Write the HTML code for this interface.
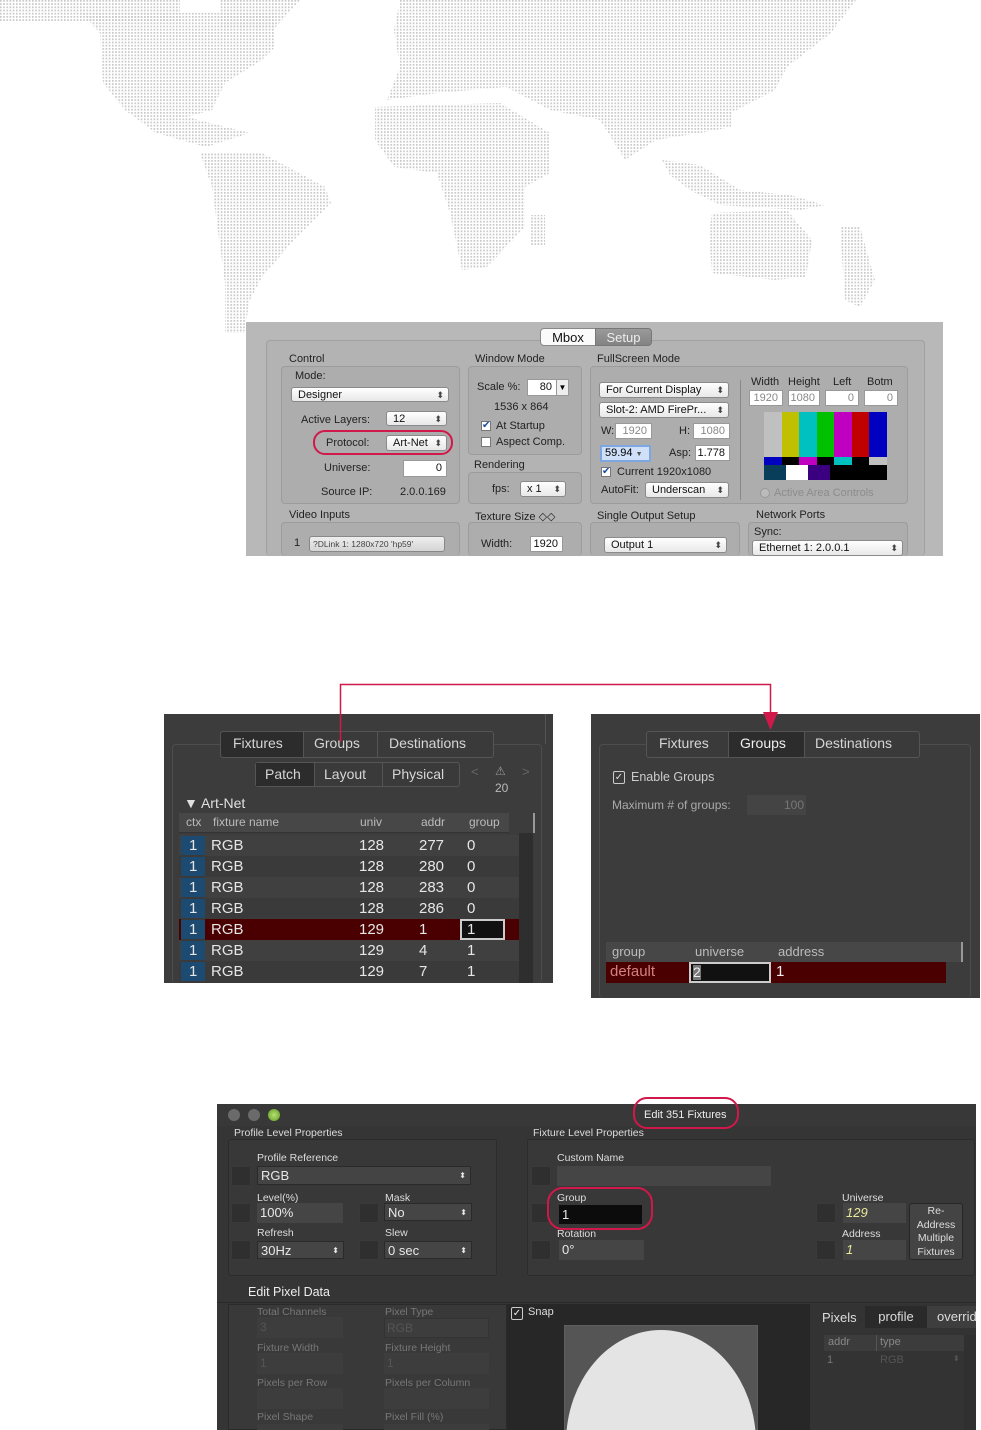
<!DOCTYPE html>
<html><head><meta charset="utf-8"><style>
*{box-sizing:border-box;margin:0;padding:0}
html{width:981px;height:1430px;overflow:hidden}
body{width:981px;height:1430px;background:#fff;position:relative;overflow:hidden;font-family:"Liberation Sans",sans-serif}
.a{position:absolute;white-space:nowrap}
.t{font-size:11px;color:#222}
.gb{position:absolute;border:1px solid #9c9c9c;border-radius:4px;background:#adadad}
.dd{position:absolute;background:linear-gradient(#fff,#e8e8e8);border:1px solid #8a8a8a;border-radius:3px;font-size:11px;color:#111;padding-left:6px;line-height:14px}
.dd:after{content:"⬍";position:absolute;right:4px;top:0;font-size:9px;color:#444}
.fld{position:absolute;background:#fff;border:1px solid #999;font-size:11px;color:#111;text-align:right;padding-right:4px;line-height:15px}
.d{font-size:14px;color:#d6d6d6}
.db{position:absolute;background:#3a3a3a;border:1px solid #555;border-radius:3px}
.sq{position:absolute;width:20px;height:20px;background:#2f2f2f;border:1px solid #3a3a3a;border-radius:2px}
.bx{position:absolute;background:#454545;font-size:13px;color:#e8e8e8;padding-left:3px;line-height:20px}
.lb{font-size:10.5px;color:#ddd}
.gl{font-size:10.5px;color:#777}
.gx{position:absolute;background:#3d3d3d}
</style></head><body>

<!-- world map -->
<svg class="a" style="left:0;top:0" width="981" height="340">
<defs><pattern id="p" width="3.2" height="3.2" patternUnits="userSpaceOnUse"><rect width="1.6" height="1.8" fill="#c8c8c8"/></pattern></defs>
<g fill="url(#p)">
<polygon points="0,0 180,0 180,22 0,22"/>
<polygon points="220,0 300,0 275,28 220,28"/>
<polygon points="81,13 275,13 275,47 262,60 225,83 212,110 187,117 250,133 206,147 156,133 125,110 103,83 100,33"/>
<polygon points="200,153 262,153 325,187 331,203 294,240 262,277 250,300 244,333 225,333 225,283 212,187"/>
<polygon points="400,0 812,0 856,0 831,33 787,67 775,90 731,113 731,127 700,133 656,140 625,160 600,120 550,110 506,87 437,93 387,100 400,67 394,30"/>
<polygon points="375,107 500,103 550,133 550,173 525,187 525,227 487,267 462,270 450,213 437,173 394,167 375,140"/>
<polygon points="530,215 545,215 545,245 530,245"/>
<polygon points="662,160 700,165 740,190 790,195 825,205 800,210 720,205 690,190 670,175"/>
<polygon points="712,213 787,210 812,240 806,277 775,280 712,273 709,233"/>
<polygon points="840,227 860,227 875,280 860,307 845,300"/>
</g></svg>

<!-- TOP PANEL -->
<div class="a" style="left:246px;top:322px;width:697px;height:234px;background:#b8b8b8"></div>
<div class="a" style="left:266px;top:340px;width:659px;height:216px;border:1px solid #a0a0a0;border-bottom:none;border-radius:4px;background:#b3b3b3"></div>
<div class="a" style="left:540px;top:328px;width:56px;height:18px;background:#fafafa;border:1px solid #888;border-radius:4px 0 0 4px;font-size:13px;text-align:center;line-height:17px;color:#111">Mbox</div>
<div class="a" style="left:595px;top:328px;width:57px;height:18px;background:linear-gradient(#9a9a9a,#838383);border:1px solid #777;border-radius:0 4px 4px 0;font-size:13px;text-align:center;line-height:17px;color:#eee">Setup</div>

<div class="a t" style="left:289px;top:353px">Control</div>
<div class="gb" style="left:281px;top:366px;width:179px;height:138px"></div>
<div class="a t" style="left:295px;top:370px">Mode:</div>
<div class="dd" style="left:291px;top:387px;width:158px;height:15px">Designer</div>
<div class="a t" style="left:301px;top:414px">Active Layers:</div>
<div class="dd" style="left:386px;top:411px;width:61px;height:15px">12</div>
<div class="a" style="left:313px;top:430px;width:140px;height:25px;border:2px solid #d0184a;border-radius:12px"></div>
<div class="a t" style="left:326px;top:437px">Protocol:</div>
<div class="dd" style="left:386px;top:435px;width:61px;height:16px">Art-Net</div>
<div class="a t" style="left:324px;top:462px">Universe:</div>
<div class="fld" style="left:403px;top:460px;width:44px;height:17px">0</div>
<div class="a t" style="left:321px;top:486px">Source IP:</div>
<div class="a t" style="left:400px;top:486px">2.0.0.169</div>

<div class="a t" style="left:475px;top:353px">Window Mode</div>
<div class="gb" style="left:468px;top:366px;width:114px;height:89px"></div>
<div class="a t" style="left:477px;top:381px">Scale %:</div>
<div class="fld" style="left:527px;top:379px;width:30px;height:17px">80</div>
<div class="a" style="left:556px;top:379px;width:13px;height:17px;background:#eee;border:1px solid #999;font-size:8px;text-align:center;line-height:15px">▼</div>
<div class="a t" style="left:494px;top:401px">1536 x 864</div>
<div class="a" style="left:481px;top:421px;width:10px;height:10px;background:#fff;border:1px solid #777;font-size:10px;line-height:8px;color:#1a4fa0">✔</div>
<div class="a t" style="left:496px;top:420px">At Startup</div>
<div class="a" style="left:481px;top:437px;width:10px;height:10px;background:#fff;border:1px solid #777"></div>
<div class="a t" style="left:496px;top:436px">Aspect Comp.</div>
<div class="a t" style="left:474px;top:459px">Rendering</div>
<div class="gb" style="left:468px;top:472px;width:114px;height:32px"></div>
<div class="a t" style="left:492px;top:483px">fps:</div>
<div class="dd" style="left:520px;top:481px;width:46px;height:16px">x 1</div>

<div class="a t" style="left:597px;top:353px">FullScreen Mode</div>
<div class="gb" style="left:590px;top:366px;width:318px;height:138px"></div>
<div class="dd" style="left:599px;top:382px;width:130px;height:16px">For Current Display</div>
<div class="dd" style="left:599px;top:402px;width:130px;height:16px">Slot-2: AMD FirePr...</div>
<div class="a t" style="left:601px;top:425px">W:</div>
<div class="fld" style="left:615px;top:423px;width:37px;height:16px;color:#888">1920</div>
<div class="a t" style="left:679px;top:425px">H:</div>
<div class="fld" style="left:693px;top:423px;width:37px;height:16px;color:#888">1080</div>
<div class="a" style="left:600px;top:445px;width:51px;height:17px;background:#cfe0f8;border:2px solid #7ea6e0;font-size:11px;line-height:13px;padding-left:3px">59.94 <span style="font-size:7px;color:#555">▼</span></div>
<div class="a t" style="left:669px;top:447px">Asp:</div>
<div class="fld" style="left:695px;top:445px;width:35px;height:16px">1.778</div>
<div class="a" style="left:601px;top:467px;width:10px;height:10px;background:#fff;border:1px solid #777;font-size:10px;line-height:8px;color:#1a4fa0">✔</div>
<div class="a t" style="left:617px;top:466px">Current 1920x1080</div>
<div class="a t" style="left:601px;top:484px">AutoFit:</div>
<div class="dd" style="left:645px;top:482px;width:84px;height:16px">Underscan</div>
<div class="a" style="left:740px;top:380px;width:1px;height:120px;background:#888"></div>
<div class="a t" style="left:751px;top:376px">Width</div>
<div class="a t" style="left:788px;top:376px">Height</div>
<div class="a t" style="left:833px;top:376px">Left</div>
<div class="a t" style="left:867px;top:376px">Botm</div>
<div class="fld" style="left:749px;top:390px;width:34px;height:16px;color:#888">1920</div>
<div class="fld" style="left:788px;top:390px;width:32px;height:16px;color:#888">1080</div>
<div class="fld" style="left:825px;top:390px;width:34px;height:16px;color:#888">0</div>
<div class="fld" style="left:864px;top:390px;width:34px;height:16px;color:#888">0</div>
<svg class="a" style="left:764px;top:412px" width="123" height="68">
<rect width="123" height="68" fill="#000"/>
<rect x="0" width="18" height="45" fill="#c0c0c0"/><rect x="18" width="17" height="45" fill="#c0c000"/><rect x="35" width="18" height="45" fill="#00c0c0"/><rect x="53" width="17" height="45" fill="#00c000"/><rect x="70" width="18" height="45" fill="#c000c0"/><rect x="88" width="17" height="45" fill="#c00000"/><rect x="105" width="18" height="45" fill="#0000c0"/>
<rect x="0" y="45" width="18" height="8" fill="#0000c0"/><rect x="35" y="45" width="18" height="8" fill="#c000c0"/><rect x="70" y="45" width="18" height="8" fill="#00c0c0"/><rect x="105" y="45" width="18" height="8" fill="#c0c0c0"/>
<rect x="0" y="53" width="22" height="15" fill="#083e5a"/><rect x="22" y="53" width="22" height="15" fill="#fff"/><rect x="44" y="53" width="22" height="15" fill="#3a0080"/>
</svg>
<div class="a" style="left:760px;top:488px;width:10px;height:10px;border:1px solid #999;border-radius:5px;background:#bbb"></div>
<div class="a t" style="left:774px;top:487px;color:#8c8c8c">Active Area Controls</div>

<div class="a t" style="left:289px;top:509px">Video Inputs</div>
<div class="gb" style="left:281px;top:522px;width:179px;height:34px;border-bottom:none"></div>
<div class="a t" style="left:294px;top:537px">1</div>
<div class="a" style="left:309px;top:536px;width:136px;height:16px;background:linear-gradient(#eee,#d5d5d5);border:1px solid #888;border-radius:3px;font-size:8.5px;line-height:14px;padding-left:3px;color:#444">?DLink 1: 1280x720 'hp59'</div>
<div class="a t" style="left:475px;top:510px">Texture Size ◇◇</div>
<div class="gb" style="left:468px;top:522px;width:114px;height:34px;border-bottom:none"></div>
<div class="a t" style="left:481px;top:538px">Width:</div>
<div class="fld" style="left:530px;top:536px;width:33px;height:16px">1920</div>
<div class="a t" style="left:597px;top:510px">Single Output Setup</div>
<div class="gb" style="left:590px;top:522px;width:150px;height:34px;border-bottom:none"></div>
<div class="dd" style="left:604px;top:537px;width:123px;height:16px">Output 1</div>
<div class="a t" style="left:756px;top:509px">Network Ports</div>
<div class="gb" style="left:748px;top:522px;width:160px;height:34px;border-bottom:none"></div>
<div class="a t" style="left:754px;top:526px">Sync:</div>
<div class="dd" style="left:752px;top:540px;width:151px;height:16px">Ethernet 1: 2.0.0.1</div>

<!-- MIDDLE LEFT -->
<div class="a" style="left:164px;top:714px;width:389px;height:269px;background:#3c3c3c;overflow:hidden"></div>
<div class="a" style="left:545px;top:714px;width:1px;height:30px;background:#555"></div>
<div class="a" style="left:172px;top:744px;width:370px;height:239px;border:1px solid #4d4d4d;border-bottom:none;border-radius:4px"></div>
<div class="db" style="left:220px;top:731px;width:274px;height:27px;background:#3a3a3a"></div>
<div class="a" style="left:221px;top:732px;width:82px;height:25px;background:#2c2c2c;border-radius:3px 0 0 3px"></div>
<div class="a d" style="left:233px;top:735px">Fixtures</div>
<div class="a" style="left:303px;top:732px;width:1px;height:25px;background:#555"></div>
<div class="a d" style="left:314px;top:735px">Groups</div>
<div class="a" style="left:377px;top:732px;width:1px;height:25px;background:#555"></div>
<div class="a d" style="left:389px;top:735px">Destinations</div>
<div class="db" style="left:255px;top:762px;width:205px;height:25px"></div>
<div class="a" style="left:256px;top:763px;width:58px;height:23px;background:#2c2c2c"></div>
<div class="a d" style="left:265px;top:766px">Patch</div>
<div class="a" style="left:314px;top:763px;width:1px;height:23px;background:#555"></div>
<div class="a d" style="left:324px;top:766px">Layout</div>
<div class="a" style="left:382px;top:763px;width:1px;height:23px;background:#555"></div>
<div class="a d" style="left:392px;top:766px">Physical</div>
<div class="a" style="left:471px;top:764px;font-size:13px;color:#666">&lt;</div>
<div class="a" style="left:495px;top:764px;font-size:12px;color:#999">⚠</div>
<div class="a" style="left:522px;top:764px;font-size:13px;color:#666">&gt;</div>
<div class="a" style="left:495px;top:781px;font-size:12px;color:#bbb">20</div>
<div class="a d" style="left:184px;top:795px;color:#e0e0e0">▼ Art-Net</div>
<div class="a" style="left:179px;top:813px;width:330px;height:20px;background:#474747;border-bottom:1px solid #333"></div>
<div class="a" style="left:533px;top:813px;width:2px;height:20px;background:#999"></div>
<div class="a" style="left:186px;top:815px;font-size:12px;color:#bbb">ctx</div>
<div class="a" style="left:213px;top:815px;font-size:12px;color:#bbb">fixture name</div>
<div class="a" style="left:360px;top:815px;font-size:12px;color:#bbb">univ</div>
<div class="a" style="left:421px;top:815px;font-size:12px;color:#bbb">addr</div>
<div class="a" style="left:469px;top:815px;font-size:12px;color:#bbb">group</div>
<div class="a" style="left:519px;top:833px;width:14px;height:150px;background:#2e2e2e"></div>
<div class="a" style="left:179px;top:835px;width:340px;height:21px;background:#404040"></div>
<div class="a" style="left:179px;top:856px;width:340px;height:21px;background:#3a3a3a"></div>
<div class="a" style="left:179px;top:877px;width:340px;height:21px;background:#404040"></div>
<div class="a" style="left:179px;top:898px;width:340px;height:21px;background:#3a3a3a"></div>
<div class="a" style="left:179px;top:919px;width:340px;height:21px;background:#4a0000"></div>
<div class="a" style="left:179px;top:940px;width:340px;height:21px;background:#404040"></div>
<div class="a" style="left:179px;top:961px;width:340px;height:22px;background:#3a3a3a"></div>
<div class="a" style="left:181px;top:836px;width:24px;height:147px;background:repeating-linear-gradient(#1d4a70 0 19px,#3a3a3a 19px 21px)"></div>
<div class="a" style="left:460px;top:919px;width:45px;height:21px;background:#111;border:2px solid #ccc"></div>
<div class="a" style="left:189px;top:835px;font-size:15px;color:#e6e6e6;line-height:21px">1<br>1<br>1<br>1<br>1<br>1<br>1</div>
<div class="a" style="left:211px;top:835px;font-size:15px;color:#e6e6e6;line-height:21px">RGB<br>RGB<br>RGB<br>RGB<br>RGB<br>RGB<br>RGB</div>
<div class="a" style="left:359px;top:835px;font-size:15px;color:#e6e6e6;line-height:21px">128<br>128<br>128<br>128<br>129<br>129<br>129</div>
<div class="a" style="left:419px;top:835px;font-size:15px;color:#e6e6e6;line-height:21px">277<br>280<br>283<br>286<br>1<br>4<br>7</div>
<div class="a" style="left:467px;top:835px;font-size:15px;color:#e6e6e6;line-height:21px">0<br>0<br>0<br>0<br>1<br>1<br>1</div>

<!-- MIDDLE RIGHT -->
<div class="a" style="left:591px;top:714px;width:389px;height:284px;background:#3c3c3c"></div>
<div class="a" style="left:599px;top:744px;width:372px;height:254px;border:1px solid #4d4d4d;border-bottom:none;border-radius:4px"></div>
<div class="db" style="left:646px;top:731px;width:274px;height:27px"></div>
<div class="a" style="left:728px;top:732px;width:76px;height:25px;background:#2c2c2c"></div>
<div class="a d" style="left:659px;top:735px">Fixtures</div>
<div class="a" style="left:728px;top:732px;width:1px;height:25px;background:#555"></div>
<div class="a d" style="left:740px;top:735px;color:#eee">Groups</div>
<div class="a" style="left:804px;top:732px;width:1px;height:25px;background:#555"></div>
<div class="a d" style="left:815px;top:735px">Destinations</div>
<div class="a" style="left:613px;top:771px;width:12px;height:13px;border:1px solid #ccc;border-radius:2px;font-size:10px;line-height:11px;color:#ddd;text-align:center">✓</div>
<div class="a" style="left:631px;top:770px;font-size:12.5px;color:#ccc">Enable Groups</div>
<div class="a" style="left:612px;top:798px;font-size:12px;color:#aaa">Maximum # of groups:</div>
<div class="a" style="left:747px;top:795px;width:59px;height:20px;background:#444;font-size:12px;color:#777;text-align:right;padding-right:2px;line-height:20px">100</div>
<div class="a" style="left:606px;top:942px;width:356px;height:20px;background:#474747"></div>
<div class="a" style="left:961px;top:942px;width:2px;height:20px;background:#999"></div>
<div class="a" style="left:612px;top:944px;font-size:13px;color:#bbb">group</div>
<div class="a" style="left:695px;top:944px;font-size:13px;color:#bbb">universe</div>
<div class="a" style="left:778px;top:944px;font-size:13px;color:#bbb">address</div>
<div class="a" style="left:606px;top:962px;width:340px;height:21px;background:#4a0000"></div>
<div class="a" style="left:610px;top:963px;font-size:15px;color:#d67f7f">default</div>
<div class="a" style="left:689px;top:962px;width:82px;height:21px;background:#111;border:2px solid #ccc"></div>
<div class="a" style="left:693px;top:965px;width:8px;height:15px;background:#777;font-size:14px;line-height:15px;color:#eee">2</div>
<div class="a" style="left:776px;top:963px;font-size:15px;color:#eee">1</div>

<!-- red arrow -->
<svg class="a" style="left:330px;top:680px" width="460" height="70">
<path d="M10.5 62V4.5H440.5V40" fill="none" stroke="#d0184a" stroke-width="1.5"/>
<path d="M433 32L448 32L440.5 50Z" fill="#d0184a"/>
</svg>

<!-- BOTTOM PANEL -->
<div class="a" style="left:217px;top:1104px;width:759px;height:326px;background:#353535"></div>
<div class="a" style="left:217px;top:1104px;width:759px;height:22px;background:#383838"></div>
<div class="a" style="left:228px;top:1109px;width:12px;height:12px;border-radius:6px;background:#6a6a6a"></div>
<div class="a" style="left:248px;top:1109px;width:12px;height:12px;border-radius:6px;background:#6a6a6a"></div>
<div class="a" style="left:268px;top:1109px;width:12px;height:12px;border-radius:6px;background:radial-gradient(#b8e070,#5a9a20)"></div>
<div class="a" style="left:644px;top:1109px;font-size:11px;color:#eee">Edit 351 Fixtures</div>
<div class="a" style="left:633px;top:1097px;width:106px;height:32px;border:2px solid #d0184a;border-radius:14px"></div>
<div class="a lb" style="left:234px;top:1127px">Profile Level Properties</div>
<div class="a lb" style="left:533px;top:1127px">Fixture Level Properties</div>
<div class="a" style="left:228px;top:1139px;width:269px;height:137px;border:1px solid #2b2b2b;border-radius:3px;background:#383838"></div>
<div class="a" style="left:527px;top:1139px;width:448px;height:137px;border:1px solid #2b2b2b;border-radius:3px;background:#383838"></div>
<div class="a lb" style="left:257px;top:1152px">Profile Reference</div>
<div class="sq" style="left:231px;top:1166px"></div>
<div class="bx" style="left:257px;top:1166px;width:214px;height:19px;background:#444;border:1px solid #2a2a2a;line-height:17px">RGB<span style="position:absolute;right:4px;font-size:8px">⬍</span></div>
<div class="a lb" style="left:257px;top:1192px">Level(%)</div>
<div class="a lb" style="left:385px;top:1192px">Mask</div>
<div class="sq" style="left:231px;top:1203px"></div><div class="sq" style="left:359px;top:1203px"></div>
<div class="bx" style="left:257px;top:1203px;width:86px;height:20px">100%</div>
<div class="bx" style="left:384px;top:1203px;width:88px;height:18px;line-height:17px;border:1px solid #2a2a2a">No<span style="position:absolute;right:4px;font-size:8px">⬍</span></div>
<div class="a lb" style="left:257px;top:1227px">Refresh</div>
<div class="a lb" style="left:385px;top:1227px">Slew</div>
<div class="sq" style="left:231px;top:1240px"></div><div class="sq" style="left:359px;top:1240px"></div>
<div class="bx" style="left:257px;top:1241px;width:87px;height:18px;line-height:17px;border:1px solid #2a2a2a">30Hz<span style="position:absolute;right:4px;font-size:8px">⬍</span></div>
<div class="bx" style="left:384px;top:1241px;width:88px;height:18px;line-height:17px;border:1px solid #2a2a2a">0 sec<span style="position:absolute;right:4px;font-size:8px">⬍</span></div>
<div class="a lb" style="left:557px;top:1152px">Custom Name</div>
<div class="sq" style="left:531px;top:1166px"></div>
<div class="bx" style="left:557px;top:1166px;width:214px;height:20px"></div>
<div class="a lb" style="left:557px;top:1192px">Group</div>
<div class="sq" style="left:531px;top:1203px"></div>
<div class="bx" style="left:559px;top:1205px;width:83px;height:19px;background:#0c0c0c;line-height:19px">1</div>
<div class="a" style="left:547px;top:1187px;width:106px;height:43px;border:2px solid #d0184a;border-radius:16px"></div>
<div class="a lb" style="left:557px;top:1228px">Rotation</div>
<div class="sq" style="left:531px;top:1240px"></div>
<div class="bx" style="left:559px;top:1240px;width:85px;height:20px">0°</div>
<div class="a lb" style="left:842px;top:1192px">Universe</div>
<div class="a lb" style="left:842px;top:1228px">Address</div>
<div class="sq" style="left:816px;top:1203px"></div><div class="sq" style="left:816px;top:1240px"></div>
<div class="bx" style="left:843px;top:1203px;width:63px;height:20px;color:#e8e89a;font-style:italic">129</div>
<div class="bx" style="left:843px;top:1240px;width:63px;height:20px;color:#e8e89a;font-style:italic">1</div>
<div class="a" style="left:909px;top:1203px;width:54px;height:57px;background:#444;border:1px solid #262626;border-radius:3px;font-size:10.5px;color:#ddd;text-align:center;line-height:13.5px;white-space:normal;padding-top:1px">Re-<br>Address<br>Multiple<br>Fixtures</div>

<div class="a" style="left:248px;top:1285px;font-size:12.5px;color:#eee">Edit Pixel Data</div>
<div class="a" style="left:217px;top:1302px;width:759px;height:1px;background:#2a2a2a"></div>
<div class="a" style="left:228px;top:1304px;width:279px;height:126px;background:#393939;border:1px solid #2a2a2a"></div>
<div class="a gl" style="left:257px;top:1306px">Total Channels</div>
<div class="a gl" style="left:385px;top:1306px">Pixel Type</div>
<div class="gx" style="left:257px;top:1317px;width:86px;height:21px;font-size:12px;color:#555;padding:3px">3</div>
<div class="gx" style="left:384px;top:1318px;width:105px;height:20px;border:1px solid #333;font-size:12px;color:#555;padding:2px">RGB</div>
<div class="a gl" style="left:257px;top:1342px">Fixture Width</div>
<div class="a gl" style="left:385px;top:1342px">Fixture Height</div>
<div class="gx" style="left:257px;top:1353px;width:86px;height:21px;font-size:12px;color:#555;padding:3px">1</div>
<div class="gx" style="left:384px;top:1353px;width:105px;height:21px;font-size:12px;color:#555;padding:3px">1</div>
<div class="a gl" style="left:257px;top:1377px">Pixels per Row</div>
<div class="a gl" style="left:385px;top:1377px">Pixels per Column</div>
<div class="gx" style="left:257px;top:1388px;width:86px;height:21px"></div>
<div class="gx" style="left:384px;top:1388px;width:105px;height:21px"></div>
<div class="a gl" style="left:257px;top:1411px">Pixel Shape</div>
<div class="a gl" style="left:385px;top:1411px">Pixel Fill (%)</div>
<div class="gx" style="left:257px;top:1424px;width:86px;height:6px"></div>
<div class="gx" style="left:384px;top:1424px;width:105px;height:6px"></div>

<div class="a" style="left:507px;top:1304px;width:303px;height:126px;background:#272727"></div>
<div class="a" style="left:511px;top:1307px;width:12px;height:13px;border:1px solid #ccc;border-radius:2px;font-size:10px;line-height:11px;color:#eee;text-align:center">✓</div>
<div class="a" style="left:528px;top:1306px;font-size:11px;color:#ddd">Snap</div>
<svg class="a" style="left:564px;top:1325px" width="194" height="105">
<rect width="194" height="105" fill="#555" stroke="#666"/>
<ellipse cx="97" cy="118" rx="95" ry="113" fill="#e4e4e4"/>
</svg>
<div class="a" style="left:810px;top:1304px;width:166px;height:126px;background:#333"></div>
<div class="a" style="left:822px;top:1310px;font-size:13px;color:#ddd">Pixels</div>
<div class="a" style="left:865px;top:1306px;width:62px;height:22px;background:#2a2a2a;font-size:13px;color:#ddd;text-align:center;line-height:21px">profile</div>
<div class="a" style="left:927px;top:1306px;width:49px;height:22px;background:#3e3e3e;font-size:13px;color:#ddd;padding-left:10px;line-height:21px;overflow:hidden">override</div>
<div class="a" style="left:824px;top:1335px;width:152px;height:16px;background:#3c3c3c"></div>
<div class="a" style="left:876px;top:1335px;width:1px;height:16px;background:#555"></div>
<div class="a" style="left:828px;top:1336px;font-size:11px;color:#888">addr</div>
<div class="a" style="left:880px;top:1336px;font-size:11px;color:#888">type</div>
<div class="a" style="left:827px;top:1354px;font-size:11px;color:#777">1</div>
<div class="a" style="left:880px;top:1354px;font-size:11px;color:#555">RGB</div>
<div class="a" style="left:953px;top:1354px;font-size:8px;color:#555">⬍</div>
<div class="a" style="left:964px;top:1335px;width:12px;height:95px;background:#303030"></div>
</body></html>
